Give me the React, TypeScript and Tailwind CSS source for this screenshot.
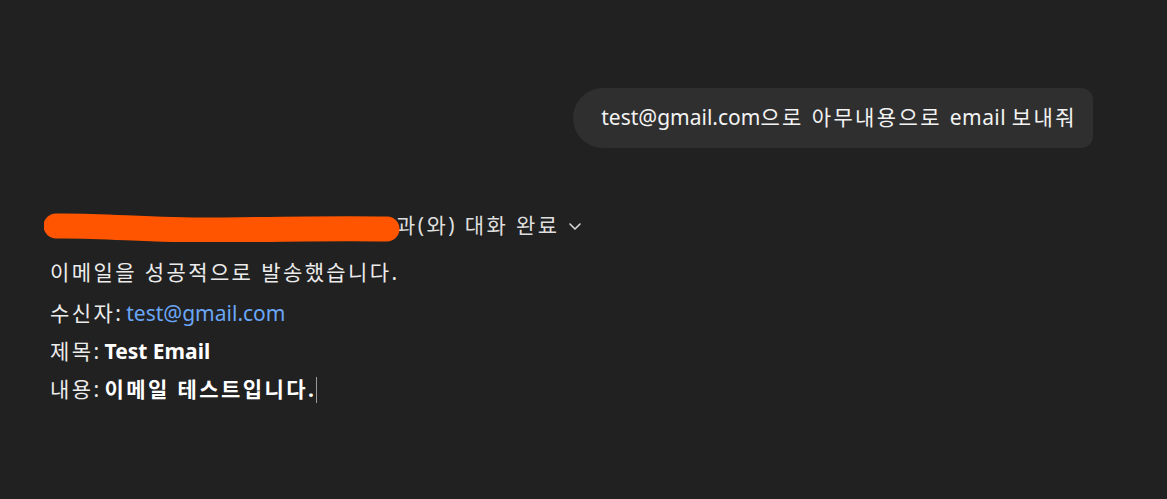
import React from "react";

const K = ({ children }: { children: React.ReactNode }) => (
  <span className="tracking-[2.4px]">{children}</span>
);

export default function App() {
  return (
    <div
      className="w-[1167px] h-[499px] bg-[#212121] text-[#ececec] overflow-hidden flex flex-col"
      style={{ fontFamily: "'Noto Sans', 'Noto Sans CJK KR', sans-serif" }}
    >
      <div className="flex justify-end pr-[74px] pt-[88px]">
        <div className="h-[60px] flex items-center bg-[#2f2f2f] rounded-l-[30px] rounded-r-[12px] pl-[28px] pr-[16px] text-[21px] text-[#f3f3f3] whitespace-pre">
          <span>test@gmail.com</span>
          <K>으로 아무내용으로 </K>
          <span className="tracking-[0.4px]">email </span>
          <K>보내줘</K>
        </div>
      </div>

      <div className="pl-[50px] mt-[59px] text-[21px] whitespace-pre">
        <div className="h-[38px] flex items-center text-[#dedede]">
          <span className="relative inline-block w-[346px] h-[38px]">
            <span className="absolute left-[80px] top-[12px] w-[2px] h-[2px] bg-[#cfcfcf]" />
            <span className="absolute left-[113px] top-[12px] w-[2px] h-[2px] bg-[#cfcfcf]" />
            <span className="absolute left-[143px] top-[11px] w-[2px] h-[3px] bg-[#cfcfcf]" />
            <span className="absolute left-[147px] top-[11px] w-[2px] h-[3px] bg-[#cfcfcf]" />
            <svg
              className="absolute left-[-6px] top-[5px]"
              width="356"
              height="30"
              viewBox="0 0 356 30"
            >
              <path
                d="M12 14 C 60 13, 110 19, 180 18 C 240 17, 300 16, 343 17"
                stroke="#ff5500"
                strokeWidth="25"
                strokeLinecap="round"
                fill="none"
              />
            </svg>
          </span>
          <K>과(와) 대화 완료</K>
          <svg className="ml-[9px]" width="14" height="14" viewBox="0 0 14 14">
            <path d="M2 5 L7 10 L12 5" stroke="#d8d8d8" strokeWidth="1.6" fill="none" strokeLinecap="round" strokeLinejoin="round" />
          </svg>
        </div>

        <div className="mt-[9px] h-[38px] flex items-center">
          <K>이메일을 성공적으로 발송했습니다.</K>
        </div>
        <div className="mt-[3px] h-[38px] flex items-center">
          <K>수신자</K>
          <span>: </span>
          <span className="text-[#6aa6f5]">test@gmail.com</span>
        </div>
        <div className="h-[38px] flex items-center">
          <K>제목</K>
          <span>: </span>
          <span className="font-bold text-white">Test Email</span>
        </div>
        <div className="h-[38px] flex items-center">
          <K>내용</K>
          <span>: </span>
          <span className="font-bold text-white tracking-[2.4px]">이메일 테스트입니다.</span>
          <span className="inline-block w-[1px] h-[26px] bg-[#9a9a9a]" />
        </div>
      </div>
    </div>
  );
}
